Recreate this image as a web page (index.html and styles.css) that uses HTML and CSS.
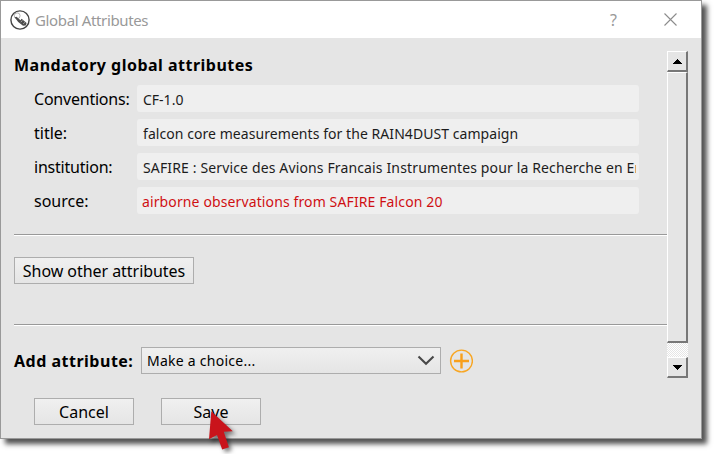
FILE: index.html
```html
<!DOCTYPE html>
<html lang="en">
<head>
<meta charset="utf-8">
<title>Global Attributes</title>
<link rel="stylesheet" href="styles.css">
</head>
<body>
<div class="window">
  <header class="titlebar">
    <svg class="app-icon" width="20" height="20" viewBox="0 0 20 20">
      <circle cx="10" cy="10" r="9.1" fill="#fff" stroke="#444" stroke-width="1.4"/>
      <circle cx="7.2" cy="5.8" r="2.9" fill="none" stroke="#aaa" stroke-width=".9"/>
      <path d="M4.6 7.2L6.6 6.8L10.4 10.2L11.6 8.8L16.6 13L15.8 15.6L13 15.8L8.2 12Z" fill="#4c4c4c"/>
      <path d="M10.8 12.2L12.4 10.4M13.2 14L14.8 12.2" stroke="#bbb" stroke-width=".8"/>
    </svg>
    <h1 class="title">Global Attributes</h1>
    <span class="help">?</span>
    <svg class="close" width="13" height="13" viewBox="0 0 13 13"><path d="M.5 .5L12.5 12.5M12.5 .5L.5 12.5" stroke="#8c8c8c" stroke-width="1.1"/></svg>
  </header>
  <div class="scroll-area">
    <main class="content">
      <h2 class="heading">Mandatory global attributes</h2>
      <div class="fields">
        <label class="label tight">Conventions:</label><div class="field"><span>CF-1.0</span></div>
        <label class="label">title:</label><div class="field"><span class="name">falcon core measurements for the RAIN4DUST campaign</span></div>
        <label class="label tight">institution:</label><div class="field"><span class="institution">SAFIRE : Service des Avions Francais Instrumentes pour la Recherche en En</span></div>
        <label class="label">source:</label><div class="field invalid"><span>airborne observations from SAFIRE Falcon 20</span></div>
      </div>
      <hr class="rule">
      <button class="button show">Show other attributes</button>
      <hr class="rule second">
      <div class="add-row">
        <span class="add-label">Add attribute:</span>
        <div class="combo"><span>Make a choice...</span>
          <svg width="18" height="11" viewBox="0 0 18 11"><path d="M1.5 1.5L9 8.8L16.5 1.5" fill="none" stroke="#484848" stroke-width="2.1"/></svg>
        </div>
        <svg class="plus" width="24" height="24" viewBox="0 0 24 24"><circle cx="12.5" cy="12" r="10.9" fill="none" stroke="#f8a623" stroke-width="1.4"/><path d="M12.5 4.5V19.5M5 12H20" stroke="#f8a01c" stroke-width="2.4"/></svg>
      </div>
    </main>
    <div class="scrollbar">
      <div class="bevel arrow"><svg width="9" height="5" viewBox="0 0 9 5" shape-rendering="crispEdges"><path d="M4 0h1v1h1v1h1v1h1v1h1v1H0V4h1V3h1V2h1V1h1z"/></svg></div>
      <div class="bevel thumb"></div>
      <div class="track"></div>
      <div class="bevel arrow"><svg width="9" height="5" viewBox="0 0 9 5" shape-rendering="crispEdges"><path d="M0 0h9v1H8v1H7v1H6v1H5v1H4V4H3V3H2V2H1V1H0z"/></svg></div>
    </div>
  </div>
  <footer class="actions">
    <button class="button">Cancel</button>
    <button class="button">Save</button>
  </footer>
</div>
<svg class="pointer" width="34" height="46" viewBox="0 0 34 46"><path d="M5.3 3.2L26.8 23.3L17.8 23.8L22.9 39.3L16.2 41.5L11 26.9L3 31.2Z" fill="#c9141b"/></svg>
</body>
</html>
```
FILE: styles.css
```css
* { box-sizing: border-box; }
body {
  margin: 0;
  width: 717px;
  height: 454px;
  overflow: hidden;
  background: #fff;
  color: #000;
  font-family: "Noto Sans", sans-serif;
  font-size: 16px;
}
.window {
  width: 702px;
  height: 439px;
  border: 1px solid #999;
  background: #e5e5e5;
  box-shadow: 5px 5px 5px rgba(0, 0, 0, .68);
}
.titlebar {
  height: 37px;
  padding-left: 9px;
  display: flex;
  align-items: center;
  background: #fff;
  color: #999;
}
.title {
  margin: 0 0 0 5px;
  font-size: 15px;
  font-weight: 400;
  letter-spacing: -.36px;
  width: 565px;
  white-space: nowrap;
}
.help { width: 20px; margin-left: 10px; font-size: 16px; }
.close { margin-left: 34px; }
.scroll-area {
  display: flex;
  width: 675px;
  height: 328px;
  margin: 13px 0 0 13px;
}
.content { width: 653px; }
.heading {
  margin: 0;
  height: 34px;
  line-height: 28px;
  font-size: 16px;
  font-weight: 700;
  letter-spacing: .49px;
  white-space: nowrap;
}
.fields {
  display: grid;
  grid-template-columns: 103px 502px;
  grid-auto-rows: 27px;
  row-gap: 7px;
  margin-left: 20px;
}
.label { line-height: 28px; white-space: nowrap; }
.tight { letter-spacing: -.22px; }
.field {
  padding: 0 3px 0 6px;
  border-radius: 3px;
  background: #efefef;
  color: #1c1c1c;
  font-size: 14px;
  line-height: 29px;
  white-space: nowrap;
}
.field span { display: block; overflow: hidden; height: 27px; }
.field .name { letter-spacing: .06px; }
.field .institution { letter-spacing: .14px; }
.invalid { color: #cf0f13; padding-left: 5px; letter-spacing: .12px; }
.rule {
  height: 2px;
  margin: 20px 0 21px;
  border: 0;
  border-top: 1px solid #999;
  border-bottom: 1px solid #fff;
}
.rule.second { margin: 40px 0 21px; }
.button {
  display: block;
  width: 100px;
  height: 27px;
  padding: 0;
  border: 1px solid #adadad;
  background: linear-gradient(#f0f0f0, #e5e5e5);
  font: inherit;
  line-height: 26px;
  color: #000;
  white-space: nowrap;
}
.show { width: 180px; letter-spacing: -.05px; }
.add-row { display: flex; align-items: center; height: 27px; }
.add-label { width: 127px; font-weight: 700; letter-spacing: .5px; white-space: nowrap; }
.combo {
  display: flex;
  align-items: center;
  justify-content: space-between;
  width: 300px;
  height: 27px;
  padding: 0 5px;
  border: 1px solid #adadad;
  background: linear-gradient(#f0f0f0, #e5e5e5);
  font-size: 14px;
  line-height: 27px;
  letter-spacing: .25px;
}
.plus { margin-left: 8px; }
.scrollbar { width: 22px; display: flex; flex-direction: column; }
.bevel {
  width: 21px;
  border: 1px solid #fff;
  border-right: 2px solid #777;
  border-bottom: 2px solid #777;
  background: #e5e5e5;
}
.arrow { height: 21px; display: flex; align-items: center; justify-content: center; }
.thumb { height: 271px; }
.track {
  width: 21px;
  height: 14px;
  background: repeating-conic-gradient(#fff 0 25%, #e5e5e5 0 50%) 0 0 / 2px 2px;
}
.actions { display: flex; gap: 27px; margin: 19px 0 0 33px; }
.pointer {
  position: absolute;
  left: 206px;
  top: 408px;
  overflow: visible;
  filter: drop-shadow(3px 3px 2px rgba(0, 0, 0, .5));
}
```
